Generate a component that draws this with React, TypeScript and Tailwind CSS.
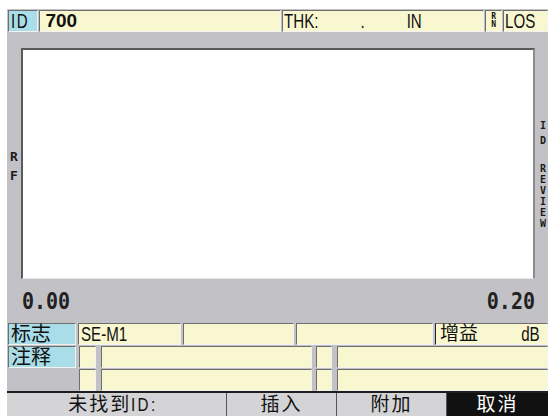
import React from "react";

const SANS = "font-['Liberation_Sans','Noto_Sans_CJK_SC',sans-serif]";
const CJK = "font-['Liberation_Sans','Noto_Sans_CJK_SC',sans-serif]";
const MONO = "font-['DejaVu_Sans_Mono',monospace]";

const inset = "border-t border-l border-t-[#6e6e6e] border-l-[#6e6e6e] border-b border-r border-b-[#f2f2f2] border-r-[#f2f2f2]";
const cyan = "bg-[#a9dde8]";
const yellow = "bg-[#f8f7cf]";

function Cell({ className = "", children }: { className?: string; children?: React.ReactNode }) {
  return <div className={`${inset} h-full flex items-center overflow-visible ${className}`}>{children}</div>;
}

function Narrow({ children, right = false, className = "" }: { children: React.ReactNode; right?: boolean; className?: string }) {
  return (
    <span className={`inline-block whitespace-pre ${right ? "origin-right" : "origin-left"} scale-x-[0.72] ${SANS} text-[21px] leading-[20px] ${className}`}>
      {children}
    </span>
  );
}

function DetailRow({ label }: { label?: string }) {
  return (
    <div className="flex h-[22px] ml-[1px]">
      {label ? (
        <Cell className={`${cyan} w-[68px] pl-[2px] text-[20px] ${CJK} leading-[20px]`}>{label}</Cell>
      ) : (
        <div className="w-[68px]" />
      )}
      <Cell className={`${yellow} w-[17px] ml-[3px]`} />
      <Cell className={`${yellow} w-[211px] ml-[5px]`} />
      <Cell className={`${yellow} w-[16px] ml-[4px]`} />
      <Cell className={`${yellow} flex-1 ml-[5px]`} />
    </div>
  );
}

export default function App() {
  return (
    <div className="w-[548px] h-[416px] bg-white pl-[7px] pt-[9px] overflow-hidden">
      <div className="w-[541px] h-[407px] bg-[#c2c2c6] flex flex-col text-[#111]">
        {/* top bar */}
        <div className="flex h-[22px] mt-[1px] ml-[1px]">
          <Cell className={`${cyan} w-[31px] pl-[2px]`}>
            <Narrow className="tracking-[2px]">ID</Narrow>
          </Cell>
          <Cell className={`${yellow} w-[246px] ml-[1px] pl-[5px] text-[19px] leading-[20px] font-bold ${SANS}`}>700</Cell>
          <Cell className={`${yellow} w-[207px] ml-[1px] pl-[1px]`}>
            <Narrow>{"THK:          .          IN"}</Narrow>
          </Cell>
          <Cell className={`${yellow} w-[17px] ml-[1px] flex-col justify-center items-center text-[8px] font-bold ${MONO} leading-[8px]`}>
            <span>R</span>
            <span>N</span>
          </Cell>
          <Cell className={`${yellow} flex-1 ml-[1px] pl-[1px]`}>
            <Narrow>LOS</Narrow>
          </Cell>
        </div>

        {/* chart row */}
        <div className="flex mt-[16px] h-[231px]">
          <div className={`w-[14px] flex flex-col items-center pt-[99px] ${MONO} font-bold text-[13px] leading-[19px] text-[#1a1a1a]`}>
            <span>R</span>
            <span>F</span>
          </div>
          <div className="w-[514px] h-full bg-white border-l-2 border-t-2 border-l-[#5a5a5a] border-t-[#5a5a5a] border-r-2 border-r-[#8c8c8c] border-b border-b-[#e6e6e6]" />
          <div className={`w-[13px] overflow-hidden flex flex-col pl-[5px] pt-[72px] ${MONO} font-bold text-[10px] text-[#1a1a1a]`}>
            <span className="block h-[11px] leading-[11px]">I</span>
            <span className="block h-[11px] leading-[11px] mt-[4px]">D</span>
            <span className="block h-[11px] leading-[11px] mt-[17px]">R</span>
            <span className="block h-[11px] leading-[11px]">E</span>
            <span className="block h-[11px] leading-[11px]">V</span>
            <span className="block h-[11px] leading-[11px]">I</span>
            <span className="block h-[11px] leading-[11px]">E</span>
            <span className="block h-[11px] leading-[11px]">W</span>
          </div>
        </div>

        {/* scale */}
        <div className={`h-[44px] flex items-center justify-between pl-[15px] pr-[13px] ${MONO} font-bold text-[20px] text-[#222]`}>
          <span className="inline-block scale-y-[1.12]">0.00</span>
          <span className="inline-block scale-y-[1.12]">0.20</span>
        </div>

        {/* detail rows */}
        <div className="flex flex-col gap-[1px]">
          <div className="flex h-[22px] ml-[1px]">
            <Cell className={`${cyan} w-[68px] pl-[2px] text-[20px] ${CJK} leading-[20px]`}>标志</Cell>
            <Cell className={`${yellow} w-[103px] ml-[2px] pl-[2px]`}>
              <Narrow>SE-M1</Narrow>
            </Cell>
            <Cell className={`${yellow} w-[111px] ml-[2px]`} />
            <Cell className={`${yellow} w-[137px] ml-[2px]`} />
            <Cell className={`${yellow} flex-1 ml-[2px] pl-[4px] pr-[7px] justify-between text-[19px] ${CJK} leading-[20px] border-l-[#222]`}>
              <span>增益</span>
              <Narrow right>dB</Narrow>
            </Cell>
          </div>
          <DetailRow label="注释" />
          <DetailRow />
        </div>

        {/* separator */}
        <div className="h-[2px] bg-[#1e1e1e]" />

        {/* bottom bar */}
        <div className={`flex h-[23px] bg-[#d4d4d6] text-[19px] ${CJK} leading-[22px]`}>
          <div className="w-[219px] flex items-center justify-center tracking-[2px]">
            未找到
            <span className="inline-block origin-left scale-x-[0.8] tracking-[3px]">ID:</span>
          </div>
          <div className="w-[1px] bg-[#555]" />
          <div className="w-[109px] flex items-center justify-center tracking-[2px]">插入</div>
          <div className="w-[1px] bg-[#555]" />
          <div className="w-[109px] flex items-center justify-center tracking-[2px]">附加</div>
          <div className="w-[1px] bg-[#555]" />
          <div className="flex-1 flex items-center justify-center bg-[#111] text-white tracking-[2px]">取消</div>
        </div>
      </div>
    </div>
  );
}
